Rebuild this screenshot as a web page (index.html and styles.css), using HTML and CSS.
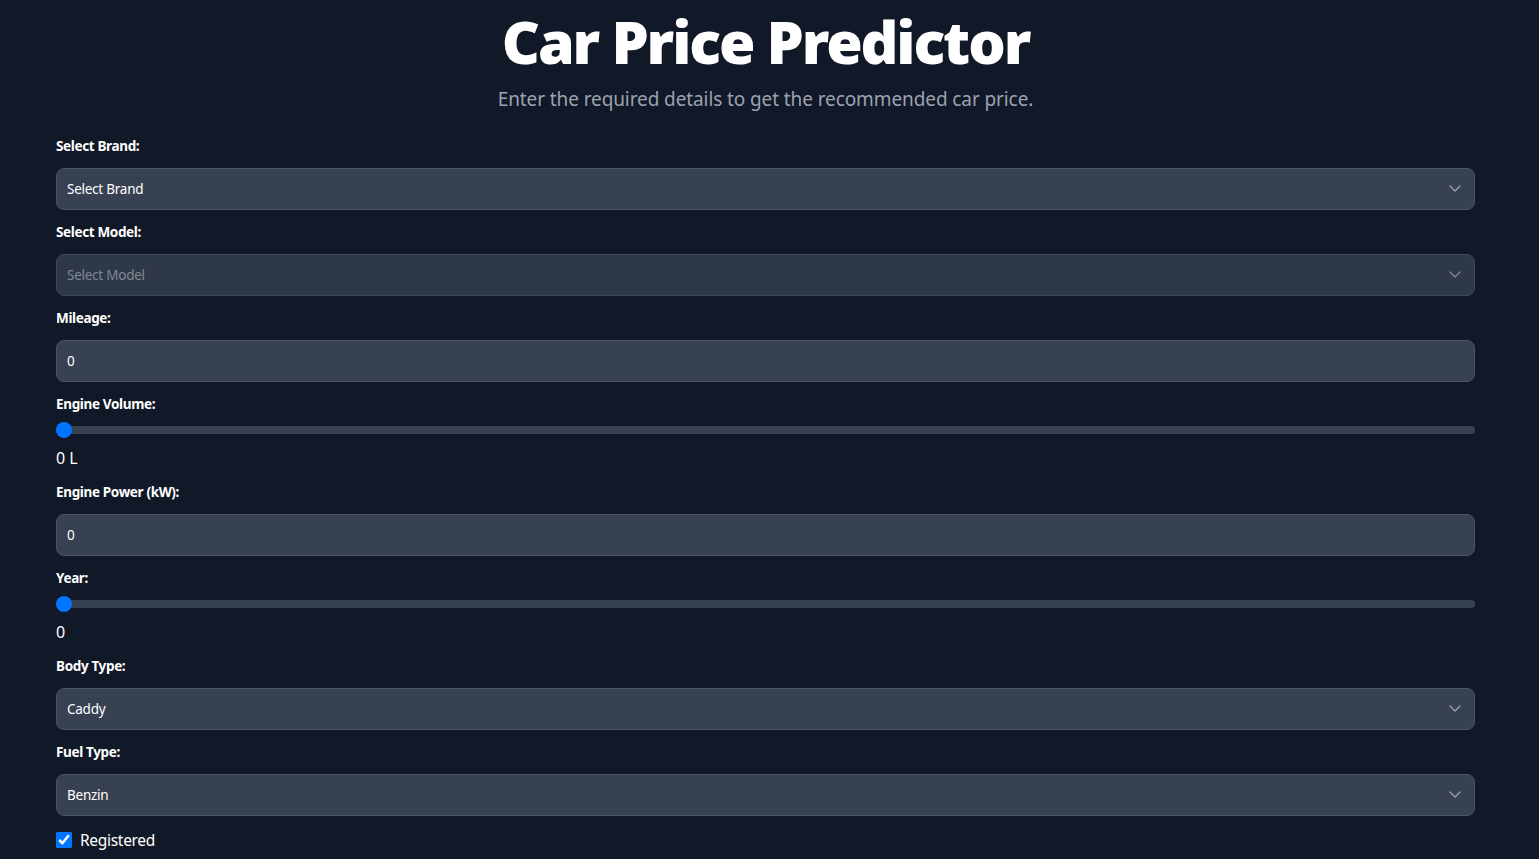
FILE: index.html
```html
<!DOCTYPE html>
<html lang="en">
<head>
<meta charset="utf-8">
<title>Car Price Predictor</title>
<link rel="stylesheet" href="styles.css">
</head>
<body>
<main class="page">
  <header class="hero">
    <h1 class="title">Car Price Predictor</h1>
    <p class="subtitle">Enter the required details to get the recommended car price.</p>
  </header>
  <form class="form">
    <label class="label">Select Brand:</label>
    <div class="select-wrap">
      <select class="field"><option>Select Brand</option></select>
      <svg class="chev" viewBox="0 0 16 16" width="16" height="16"><path d="M3 6l5 5 5-5" fill="none" stroke="currentColor" stroke-width="1.3" stroke-linecap="round" stroke-linejoin="round"/></svg>
    </div>
    <label class="label">Select Model:</label>
    <div class="select-wrap disabled">
      <select class="field" disabled><option>Select Model</option></select>
      <svg class="chev" viewBox="0 0 16 16" width="16" height="16"><path d="M3 6l5 5 5-5" fill="none" stroke="currentColor" stroke-width="1.3" stroke-linecap="round" stroke-linejoin="round"/></svg>
    </div>
    <label class="label">Mileage:</label>
    <input class="field" type="text" value="0">
    <label class="label">Engine Volume:</label>
    <input class="range" type="range" min="0" max="10" value="0">
    <div class="value">0 L</div>
    <label class="label">Engine Power (kW):</label>
    <input class="field" type="text" value="0">
    <label class="label">Year:</label>
    <input class="range" type="range" min="0" max="10" value="0">
    <div class="value">0</div>
    <label class="label">Body Type:</label>
    <div class="select-wrap">
      <select class="field"><option>Caddy</option></select>
      <svg class="chev" viewBox="0 0 16 16" width="16" height="16"><path d="M3 6l5 5 5-5" fill="none" stroke="currentColor" stroke-width="1.3" stroke-linecap="round" stroke-linejoin="round"/></svg>
    </div>
    <label class="label">Fuel Type:</label>
    <div class="select-wrap">
      <select class="field"><option>Benzin</option></select>
      <svg class="chev" viewBox="0 0 16 16" width="16" height="16"><path d="M3 6l5 5 5-5" fill="none" stroke="currentColor" stroke-width="1.3" stroke-linecap="round" stroke-linejoin="round"/></svg>
    </div>
    <label class="check"><input type="checkbox" checked class="checkbox"><span>Registered</span></label>
  </form>
</main>
</body>
</html>
```
FILE: styles.css
```css
* { box-sizing: border-box; }
html, body { margin: 0; padding: 0; }
body {
  background: #111827;
  color: #ffffff;
  font-family: "Noto Sans", "Open Sans", sans-serif;
  overflow: hidden;
}
.page {
  padding: 11px 64px 0 56px;
}
.hero {
  text-align: center;
}
.title {
  margin: 0;
  font-size: 59px;
  line-height: 60px;
  font-weight: 900;
  letter-spacing: -2.1px;
  color: #ffffff;
}
.subtitle {
  margin: 14px 0 0;
  font-size: 19px;
  line-height: 28px;
  letter-spacing: -0.1px;
  color: #9ca3af;
}
.form {
  display: flex;
  flex-direction: column;
  gap: 12px;
  margin-top: 23px;
}
.label {
  display: block;
  font-size: 13.5px;
  line-height: 20px;
  font-weight: 700;
  letter-spacing: -0.35px;
  color: #ffffff;
}
.select-wrap {
  position: relative;
}
.select-wrap.disabled {
  opacity: 0.8;
}
.field {
  display: block;
  width: 100%;
  height: 42px;
  margin: 0;
  padding: 0 10px;
  background: #374151;
  border: 1px solid #4b5563;
  border-radius: 8px;
  color: #ffffff;
  font-family: inherit;
  font-size: 13.5px;
  letter-spacing: -0.25px;
  outline: none;
  appearance: none;
  -webkit-appearance: none;
}
select.field:disabled {
  color: #9ca3af;
  opacity: 1;
}
.chev {
  position: absolute;
  right: 12px;
  top: 12px;
  color: #9ca3af;
  pointer-events: none;
}
.range {
  display: block;
  width: 100%;
  height: 16px;
  margin: -4px 0 0;
  background: transparent;
  appearance: none;
  -webkit-appearance: none;
}
.range::-webkit-slider-runnable-track {
  height: 8px;
  background: #374151;
  border-radius: 8px;
}
.range::-webkit-slider-thumb {
  -webkit-appearance: none;
  width: 16px;
  height: 16px;
  margin-top: -4px;
  border-radius: 50%;
  background: #0075ff;
  border: none;
}
.value {
  font-size: 16px;
  line-height: 24px;
  margin-top: -4px;
  color: #ffffff;
}
.check {
  display: flex;
  align-items: center;
  gap: 8px;
  font-size: 15.5px;
  line-height: 24px;
  letter-spacing: -0.3px;
}
.checkbox {
  width: 16px;
  height: 16px;
  margin: 0;
  accent-color: #0075ff;
}
```
